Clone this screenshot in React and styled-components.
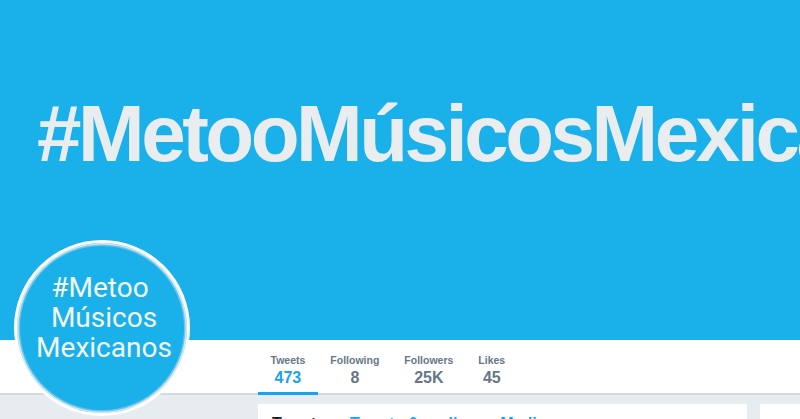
import React from "react";
import styled, { createGlobalStyle } from "styled-components";

const GlobalStyle = createGlobalStyle`
  html, body {
    margin: 0;
    padding: 0;
    background: #e6ecf0;
    overflow: hidden;
  }
  body {
    font-family: "Liberation Sans", Arial, sans-serif;
  }
`;

const Page = styled.div`
  position: relative;
  width: 800px;
  height: 419px;
  overflow: hidden;
  background: #e6ecf0;
`;

const Banner = styled.div`
  height: 340px;
  background: #1ab0ea;
  padding: 94px 0 0 37px;
  box-sizing: border-box;
  overflow: hidden;
  white-space: nowrap;
`;

const BannerText = styled.div`
  font-family: "Liberation Sans", Arial, sans-serif;
  font-weight: 700;
  font-size: 80px;
  line-height: 1;
  color: #e9edef;
  letter-spacing: -3.5px;
`;

const NavBar = styled.div`
  height: 53px;
  background: #fff;
  border-bottom: 2px solid #d3dbe0;
  box-sizing: content-box;
  display: flex;
  padding-left: 258px;
`;

const Stat = styled.div`
  display: flex;
  flex-direction: column;
  align-items: center;
  padding: 14px 12.5px 0;
  border-bottom: 3px solid ${({ $active }) => ($active ? "#1da1f2" : "transparent")};
  margin-bottom: -2px;
`;

const StatLabel = styled.div`
  font-size: 10.5px;
  font-weight: 700;
  color: #657786;
  line-height: 12px;
`;

const StatValue = styled.div`
  font-size: 16px;
  font-weight: 700;
  line-height: 20px;
  margin-top: 2px;
  color: ${({ $active }) => ($active ? "#1da1f2" : "#657786")};
`;

const Content = styled.div`
  display: flex;
  padding: 9px 0 0 258px;
  gap: 13px;
`;

const Card = styled.div`
  background: #fff;
  width: ${({ $w }) => $w}px;
  height: 40px;
  display: flex;
  gap: 25px;
  padding: 9px 0 0 14px;
  box-sizing: border-box;
`;

const CardTab = styled.div`
  font-size: 16px;
  font-weight: 700;
  line-height: 22px;
  color: ${({ $active }) => ($active ? "#14171a" : "#1da1f2")};
`;

const Avatar = styled.div`
  position: absolute;
  left: 14px;
  top: 240px;
  width: 176px;
  height: 176px;
  border-radius: 50%;
  box-sizing: border-box;
  background: #1ab0ea;
  border: 3px solid #fff;
  box-shadow: inset 0 0 0 1.5px #cfe9f4, inset 0 0 0 3px #6cc4e6;
  display: flex;
  flex-direction: column;
  align-items: center;
  padding: 30px 0 0 4px;
`;

const AvatarLine = styled.div`
  font-family: Roboto, "Liberation Sans", sans-serif;
  font-size: 28px;
  line-height: 30px;
  color: #f4f8fa;
  margin-left: ${({ $shift }) => $shift || 0}px;
`;

const stats = [
  { label: "Tweets", value: "473", active: true },
  { label: "Following", value: "8" },
  { label: "Followers", value: "25K" },
  { label: "Likes", value: "45" },
];

export default function App() {
  return (
    <Page>
      <GlobalStyle />
      <Banner>
        <BannerText>#MetooMúsicosMexicanos</BannerText>
      </Banner>
      <NavBar>
        {stats.map((s) => (
          <Stat key={s.label} $active={s.active}>
            <StatLabel>{s.label}</StatLabel>
            <StatValue $active={s.active}>{s.value}</StatValue>
          </Stat>
        ))}
      </NavBar>
      <Content>
        <Card $w={494}>
          <CardTab $active>Tweets</CardTab>
          <CardTab>Tweets &amp; replies</CardTab>
          <CardTab>Media</CardTab>
        </Card>
        <Card $w={40} />
      </Content>
      <Avatar>
        <AvatarLine $shift={-8}>#Metoo</AvatarLine>
        <AvatarLine>Músicos</AvatarLine>
        <AvatarLine>Mexicanos</AvatarLine>
      </Avatar>
    </Page>
  );
}
